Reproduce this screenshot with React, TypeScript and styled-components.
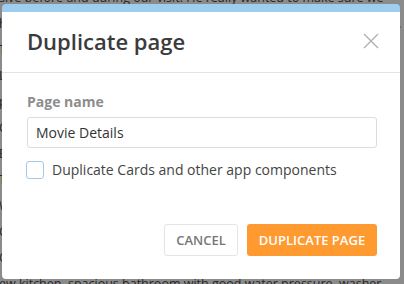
import React from 'react';
import styled, { createGlobalStyle } from 'styled-components';

const GlobalStyle = createGlobalStyle`
  html, body {
    margin: 0;
    padding: 0;
  }
  body {
    width: 404px;
    height: 284px;
    overflow: hidden;
    font-family: 'Open Sans', 'Noto Sans', sans-serif;
  }
`;

const Backdrop = styled.div`
  position: relative;
  width: 404px;
  height: 284px;
  overflow: hidden;
  background: #8b8b8b;
`;

const PageText = styled.div`
  display: flex;
  flex-direction: column;
  margin: -15px 0 0 -1px;
  color: #262626;
  font-size: 12.5px;
  line-height: 26px;
  white-space: nowrap;
`;

const Modal = styled.div`
  position: absolute;
  left: 2px;
  top: 4px;
  width: 398px;
  height: 275px;
  box-sizing: border-box;
  display: flex;
  flex-direction: column;
  background: #fff;
  border-top: 8px solid #9fcdf0;
  border-radius: 4px;
`;

const Header = styled.div`
  height: 61px;
  box-sizing: border-box;
  display: flex;
  align-items: center;
  justify-content: space-between;
  padding: 0 21px 3px 25px;
  border-bottom: 1px solid #e3e3e3;
`;

const Title = styled.h2`
  margin: 0;
  font-size: 22px;
  font-weight: 600;
  line-height: 30px;
  color: #3b3b3b;
`;

const CloseButton = styled.button`
  width: 16px;
  height: 16px;
  padding: 0;
  border: 0;
  background: none;
  display: flex;
  cursor: pointer;
`;

const Body = styled.div`
  display: flex;
  flex-direction: column;
  padding: 19px 23px 0 25px;
`;

const Label = styled.label`
  font-size: 14px;
  font-weight: 700;
  line-height: 20px;
  color: #8d8d8d;
  margin-bottom: 5px;
`;

const TextInput = styled.input`
  height: 31px;
  box-sizing: border-box;
  padding: 0 8px;
  border: 1px solid #dcdcdc;
  border-radius: 3px;
  font-family: inherit;
  font-size: 14px;
  color: #333;
  outline: none;
`;

const CheckRow = styled.label`
  display: flex;
  align-items: center;
  gap: 8px;
  margin: 13px 0 0 -1px;
  font-size: 14px;
  line-height: 18px;
  color: #444;
`;

const CheckBox = styled.span`
  width: 18px;
  height: 18px;
  box-sizing: border-box;
  border: 1.5px solid #a9c7e7;
  border-radius: 3px;
  background: #fff;
`;

const Footer = styled.div`
  margin-top: auto;
  display: flex;
  justify-content: flex-end;
  gap: 9px;
  padding: 0 23px 23px;
`;

const Button = styled.button<{ $primary?: boolean; $width: number }>`
  height: 32px;
  width: ${p => p.$width}px;
  box-sizing: border-box;
  border-radius: 3px;
  border: ${p => (p.$primary ? 'none' : '1px solid #e4e4e4')};
  background: ${p => (p.$primary ? '#fe9a30' : '#fff')};
  color: ${p => (p.$primary ? '#fff' : '#777')};
  font-family: inherit;
  font-size: 13px;
  font-weight: 600;
  text-transform: uppercase;
  cursor: pointer;
`;

const lines = [
  'sive before and during our visit. He really wanted to make sure we',
  'had everything we needed and answered all of our questions quickly.',
  'The apartment itself was clean, bright and exactly as pictured.',
  'Location was perfect for exploring the neighbourhood on foot, with',
  'plenty of cafes, shops and a park just around the corner from us.',
  'Check-in was easy and the instructions were very clear and simple.',
  'Beds were comfortable and we slept really well every single night.',
  'There were fresh towels, linens and some basics in the cupboards.',
  'We would definitely stay here again and recommend it to friends.',
  'Great value for the price, nicely furnished living room and a ne',
  'Quiet street at night, easy parking, modern appliances and a n',
  'ew kitchen, spacious bathroom with good water pressure, washer',
];

export default function App() {
  return (
    <Backdrop>
      <GlobalStyle />
      <PageText>
        {lines.map((l, i) => <div key={i}>{l}</div>)}
      </PageText>
      <Modal>
        <Header>
          <Title>Duplicate page</Title>
          <CloseButton aria-label='Close'>
            <svg width='16' height='16' viewBox='0 0 16 16'>
              <path d='M1 1L15 15M15 1L1 15' stroke='#b0b0b0' strokeWidth='1.4' fill='none' />
            </svg>
          </CloseButton>
        </Header>
        <Body>
          <Label>Page name</Label>
          <TextInput defaultValue='Movie Details' />
          <CheckRow>
            <CheckBox />
            Duplicate Cards and other app components
          </CheckRow>
        </Body>
        <Footer>
          <Button $width={74}>Cancel</Button>
          <Button $width={130} $primary>Duplicate page</Button>
        </Footer>
      </Modal>
    </Backdrop>
  );
}
